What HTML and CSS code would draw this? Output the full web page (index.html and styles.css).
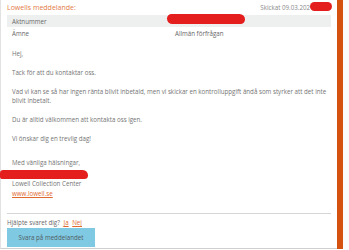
FILE: index.html
```html
<!DOCTYPE html>
<html lang="sv">
<head>
    <meta charset="UTF-8">
    <title>Meddelande</title>
    <link rel="stylesheet" href="styles.css">
</head>
<body>
    <div class="panel">
        <div class="head">
            <span class="title">Lowells meddelande:</span>
            <span class="sent">Skickat 09.03.202<span class="mark mark-date"></span></span>
        </div>
        <div class="table">
            <div class="row grey"><span class="key">Aktnummer</span><span class="val"><span class="mark mark-case"></span></span></div>
            <div class="row"><span class="key">Ämne</span><span class="val">Allmän förfrågan</span></div>
        </div>
        <div class="message">
            <p>Hej,</p>
            <p>Tack för att du kontaktar oss.</p>
            <p>Vad vi kan se så har ingen ränta blivit inbetald, men vi skickar en kontrolluppgift ändå som styrker att det inte blivit inbetalt.</p>
            <p>Du är alltid välkommen att kontakta oss igen.</p>
            <p>Vi önskar dig en trevlig dag!</p>
            <p class="sign">Med vänliga hälsningar,<br><span class="mark mark-name"></span><br>Lowell Collection Center<br><a href="#">www.lowell.se</a></p>
        </div>
        <div class="feedback">
            Hjälpte svaret dig? <a href="#">Ja</a> <a href="#">Nej</a>
        </div>
        <button class="reply">Svara på meddelandet</button>
    </div>
    <div class="bar"></div>
    <div class="rest"></div>
</body>
</html>
```

FILE: styles.css
```css
*{
    margin: 0;
    padding: 0;
    box-sizing: border-box;
    font-family: "Open Sans", "Liberation Sans", sans-serif;
}
body{
    display: flex;
    height: 250px;
    background-color: #fff;
    color: #747474;
    font-size: 6.2px;
}
.panel{
    width: 337px;
    height: 249px;
    border-left: 1px solid #e2e2e2;
    border-bottom: 1px solid #cfcfcf;
    padding: 0 6px 0 6px;
}
.bar{
    width: 6px;
    height: 249px;
    background-color: #d4510f;
}
.rest{
    flex: 1;
    background-color: #fbfbfb;
}
.head{
    display: flex;
    justify-content: space-between;
    align-items: center;
    height: 15px;
}
.title{
    color: #e27a46;
    font-size: 7px;
}
.sent{
    color: #8a8a8a;
    display: flex;
    align-items: center;
}
.mark{
    display: inline-block;
    background-color: #e41d1d;
    border-radius: 6px;
    position: relative;
}
.mark-date{
    width: 22px;
    height: 9px;
    margin-right: -1px;
    top: -1px;
}
.table{
    width: 324px;
}
.row{
    display: flex;
    align-items: center;
    height: 12px;
    color: #666;
}
.grey{
    background-color: #eef0f0;
}
.key{
    width: 168px;
    padding-left: 5px;
}
.val{
    flex: 1;
}
.mark-case{
    width: 78px;
    height: 10px;
    left: -8px;
    top: -1px;
    border-radius: 5px 6px 5px 6px;
}
.message{
    padding: 10px 0 10px 5px;
    line-height: 9.5px;
}
.message p{
    margin-bottom: 9.3px;
}
.message .sign{
    margin-top: 15px;
    margin-bottom: 5px;
}
.mark-name{
    width: 88px;
    height: 9px;
    left: -12px;
    top: 2px;
    border-radius: 5px 8px 6px 4px;
}
a{
    color: #e0692e;
}
.feedback{
    border-top: 1px solid #d6d6d6;
    padding-top: 5px;
    line-height: 8px;
    color: #666;
}
.feedback a{
    margin-left: 2px;
}
.reply{
    margin-top: 1px;
    width: 88px;
    height: 19px;
    border: none;
    background-color: #80c9e2;
    color: #4f5c63;
    font-size: 6.2px;
}
```
